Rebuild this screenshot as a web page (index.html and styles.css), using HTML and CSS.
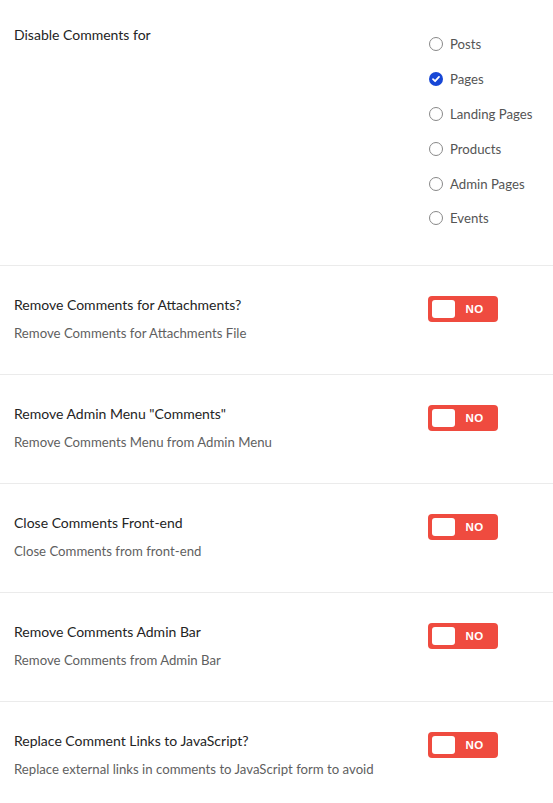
FILE: index.html
```html
<!DOCTYPE html>
<html lang="en">
<head>
    <meta charset="UTF-8">
    <meta name="viewport" content="width=device-width, initial-scale=1.0">
    <title>Disable Comments</title>
    <link rel="stylesheet" href="styles.css">
</head>
<body>

    <div class="settings">
        <div class="setting first">
            <div class="info">
                <div class="title">Disable Comments for</div>
            </div>
            <div class="control">
                <ul class="radios">
                    <li><span class="radio"></span>Posts</li>
                    <li><span class="radio checked">
                        <svg viewBox="0 0 14 14" width="14" height="14"><circle cx="7" cy="7" r="7" fill="#1747d6"/><path d="M4 7.2 L6.1 9.2 L10 4.9" fill="none" stroke="#fff" stroke-width="1.8" stroke-linecap="round" stroke-linejoin="round"/></svg>
                    </span>Pages</li>
                    <li><span class="radio"></span>Landing Pages</li>
                    <li><span class="radio"></span>Products</li>
                    <li><span class="radio"></span>Admin Pages</li>
                    <li><span class="radio"></span>Events</li>
                </ul>
            </div>
        </div>

        <div class="setting">
            <div class="info">
                <div class="title">Remove Comments for Attachments?</div>
                <div class="desc">Remove Comments for Attachments File</div>
            </div>
            <div class="control">
                <div class="toggle"><span class="knob"></span><span class="label">NO</span></div>
            </div>
        </div>

        <div class="setting">
            <div class="info">
                <div class="title">Remove Admin Menu "Comments"</div>
                <div class="desc">Remove Comments Menu from Admin Menu</div>
            </div>
            <div class="control">
                <div class="toggle"><span class="knob"></span><span class="label">NO</span></div>
            </div>
        </div>

        <div class="setting">
            <div class="info">
                <div class="title">Close Comments Front-end</div>
                <div class="desc">Close Comments from front-end</div>
            </div>
            <div class="control">
                <div class="toggle"><span class="knob"></span><span class="label">NO</span></div>
            </div>
        </div>

        <div class="setting">
            <div class="info">
                <div class="title">Remove Comments Admin Bar</div>
                <div class="desc">Remove Comments from Admin Bar</div>
            </div>
            <div class="control">
                <div class="toggle"><span class="knob"></span><span class="label">NO</span></div>
            </div>
        </div>

        <div class="setting last">
            <div class="info">
                <div class="title">Replace Comment Links to JavaScript?</div>
                <div class="desc">Replace external links in comments to JavaScript form to avoid</div>
            </div>
            <div class="control">
                <div class="toggle"><span class="knob"></span><span class="label">NO</span></div>
            </div>
        </div>
    </div>

</body>
</html>
```

FILE: styles.css
```css
* {
    margin: 0;
    padding: 0;
    box-sizing: border-box;
}

body {
    font-family: 'Lato', 'Noto Sans', sans-serif;
    background-color: #fff;
    color: #222;
}

.settings {
    width: 553px;
}

.setting {
    display: flex;
    height: 109px;
    padding: 29px 0 0 14px;
    border-bottom: 1px solid #ebebeb;
}

.setting.first {
    height: 266px;
    padding-top: 25px;
}

.setting.last {
    border-bottom: none;
}

.info {
    flex: 1;
}

.title {
    font-size: 14px;
    line-height: 20px;
    color: #242424;
}

.desc {
    margin-top: 8px;
    font-size: 13.2px;
    line-height: 20px;
    color: #5f5f5f;
}

.control {
    width: 125px;
}

.radios {
    list-style: none;
    padding-top: 2px;
}

.radios li {
    display: flex;
    align-items: center;
    height: 34.8px;
    font-size: 13.2px;
    color: #555;
}

.radio {
    display: inline-block;
    width: 14px;
    height: 14px;
    margin: 0 7px 0 1px;
    border: 1px solid #888;
    border-radius: 50%;
}

.radio.checked {
    border: none;
}

.radio svg {
    display: block;
}

.toggle {
    display: flex;
    align-items: center;
    width: 70px;
    height: 26px;
    margin-top: 1px;
    padding: 4px;
    background-color: #ef4b3f;
    border-radius: 4px;
}

.knob {
    width: 23px;
    height: 18px;
    background-color: #fff;
    border-radius: 3px;
}

.label {
    flex: 1;
    text-align: center;
    font-family: 'Liberation Sans', Arial, sans-serif;
    font-size: 11.5px;
    font-weight: bold;
    color: #fff;
    letter-spacing: 0.3px;
}
```
